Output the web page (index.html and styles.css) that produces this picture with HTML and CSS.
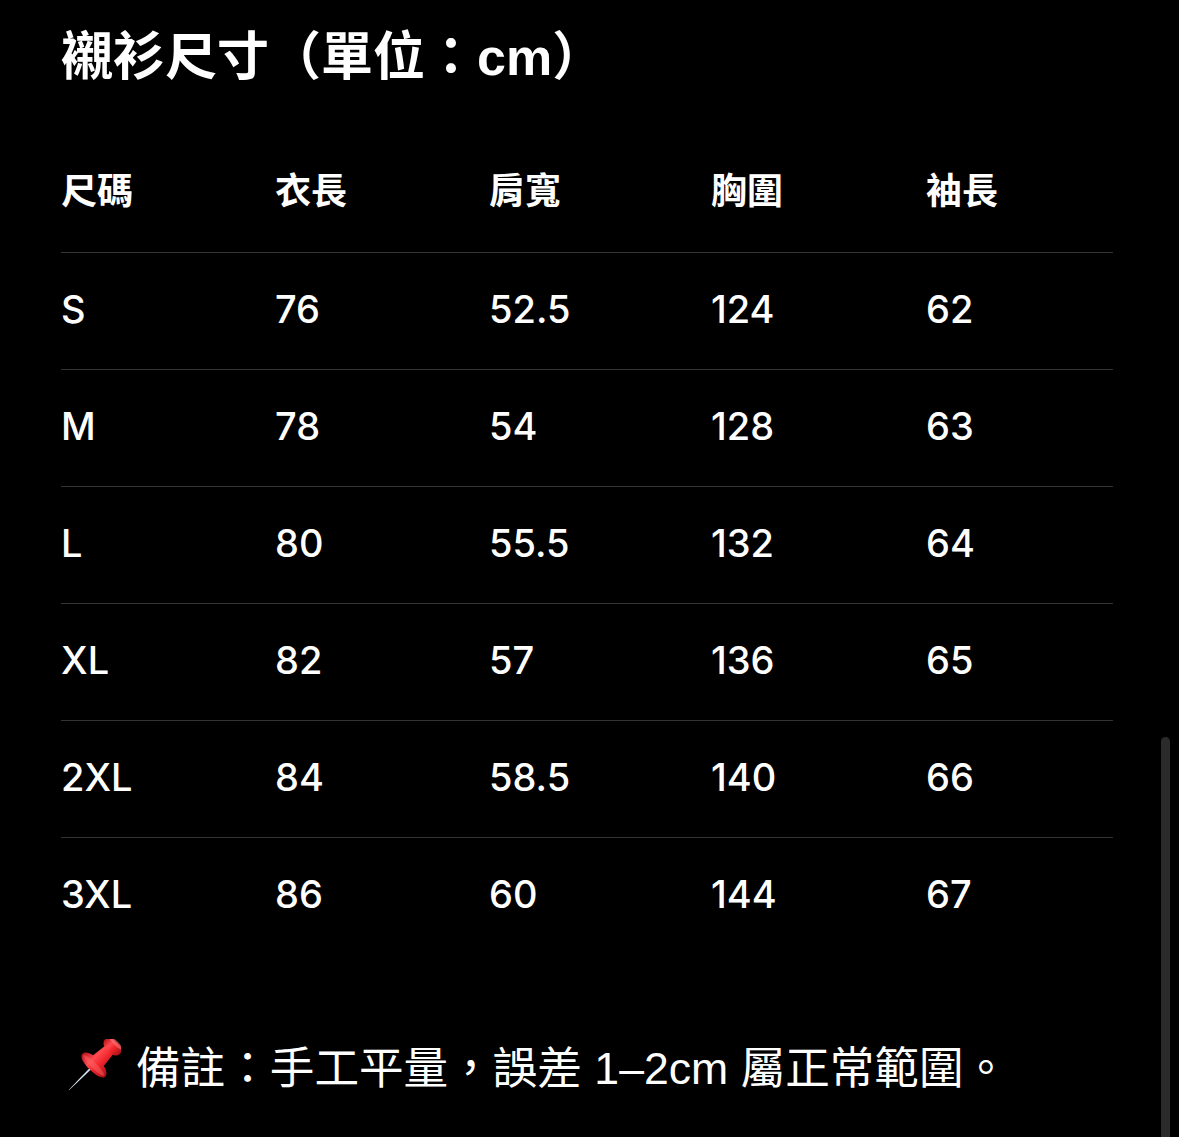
FILE: index.html
```html
<!DOCTYPE html>
<html lang="zh-Hant">
<head>
<meta charset="utf-8">
<title>襯衫尺寸</title>
<link rel="stylesheet" href="styles.css">
</head>
<body>
<main class="page">
  <h1 class="title">襯衫尺寸（單位：cm）</h1>
  <div class="table">
    <div class="row head">
      <div>尺碼</div><div>衣長</div><div>肩寬</div><div>胸圍</div><div>袖長</div>
    </div>
    <div class="row"><div>S</div><div>76</div><div>52.5</div><div>124</div><div>62</div></div>
    <div class="row"><div>M</div><div>78</div><div>54</div><div>128</div><div>63</div></div>
    <div class="row"><div>L</div><div>80</div><div>55.5</div><div>132</div><div>64</div></div>
    <div class="row"><div>XL</div><div>82</div><div>57</div><div>136</div><div>65</div></div>
    <div class="row"><div>2XL</div><div>84</div><div>58.5</div><div>140</div><div>66</div></div>
    <div class="row"><div>3XL</div><div>86</div><div>60</div><div>144</div><div>67</div></div>
  </div>
  <p class="note">
    <svg class="pin" viewBox="0 0 60 60" width="60" height="60" aria-hidden="true">
      <defs>
        <linearGradient id="red" x1="0" y1="0" x2="1" y2="0">
          <stop offset="0" stop-color="#b5121a"/>
          <stop offset="0.35" stop-color="#ff4a4f"/>
          <stop offset="0.6" stop-color="#f0262c"/>
          <stop offset="1" stop-color="#a80f16"/>
        </linearGradient>
        <linearGradient id="needle" x1="0" y1="0" x2="1" y2="0">
          <stop offset="0" stop-color="#6f7f90"/>
          <stop offset="0.5" stop-color="#dfe8f2"/>
          <stop offset="1" stop-color="#7f8fa0"/>
        </linearGradient>
      </defs>
      <g transform="translate(32 27) rotate(45) scale(0.95)">
        <path d="M-1.3 2 L1.3 2 L0.2 36 L-0.2 36 Z" fill="url(#needle)"/>
        <path d="M-6 -24 L6 -24 L8 -8 C14 -7 17 -4 17 -1 C17 3 9 5 0 5 C-9 5 -17 3 -17 -1 C-17 -4 -14 -7 -8 -8 Z" fill="url(#red)"/>
        <ellipse cx="0" cy="-1" rx="15" ry="3" fill="#ff6a6e" opacity="0.45"/>
        <rect x="-11" y="-35" width="22" height="12" rx="6" fill="url(#red)"/>
        <ellipse cx="0" cy="-34" rx="9" ry="2.5" fill="#ff7377" opacity="0.6"/>
      </g>
    </svg>
    <span>備註：手工平量，誤差 1–2cm 屬正常範圍。</span>
  </p>
</main>
<div class="scrollbar"></div>
</body>
</html>
```

FILE: styles.css
```css
html, body {
  margin: 0;
  padding: 0;
  background: #000;
}

body {
  color: #fff;
  font-family: "Liberation Sans", "Noto Sans CJK TC", sans-serif;
  overflow: hidden;
}

.page {
  padding: 26px 0 0 61px;
  width: 1052px;
}

.title {
  margin: 0;
  font-size: 52px;
  line-height: 62px;
  font-weight: 700;
  white-space: nowrap;
}

.table {
  margin-top: 47px;
}

.row {
  display: grid;
  grid-template-columns: 214px 214px 222px 215px 1fr;
  font-family: Inter, "Noto Sans CJK TC", sans-serif;
  font-weight: 500;
  font-size: 38px;
  line-height: 112px;
  padding-bottom: 4px;
  border-top: 1px solid #333;
}

.row.head {
  border-top: 1px solid transparent;
  font-family: "Liberation Sans", "Noto Sans CJK TC", sans-serif;
  font-weight: 700;
  font-size: 36px;
}

.row.head + .row {
  border-top: 1px solid #333;
}

.note {
  margin: 85px 0 0 0;
  display: flex;
  align-items: center;
  gap: 15px;
  font-size: 44.6px;
  line-height: 60px;
  white-space: nowrap;
}

.pin {
  flex: none;
}

.scrollbar {
  position: fixed;
  left: 1161px;
  top: 737px;
  width: 9px;
  height: 420px;
  border-radius: 5px;
  background: #2b2b2b;
}
```
